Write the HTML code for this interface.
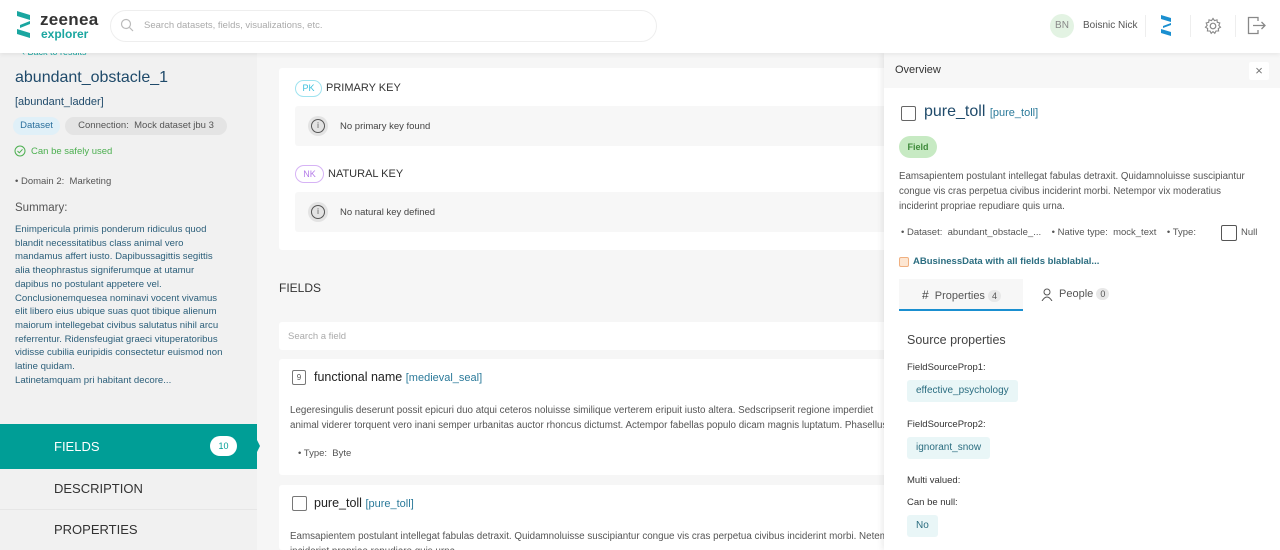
<!DOCTYPE html>
<html><head><meta charset="utf-8"><style>
*{box-sizing:border-box;margin:0;padding:0}
html{width:1280px;height:550px;overflow:hidden}
body{width:1280px;height:550px;overflow:hidden;font-family:"Liberation Sans",sans-serif;background:#f6f6f6;position:relative;color:#333}
.abs{position:absolute}
#hdr{left:0;top:0;width:1280px;height:53px;background:#fff;box-shadow:0 2px 4px rgba(0,0,0,.06);z-index:5}
#side{left:0;top:53px;width:257px;height:497px;background:#f1f1f1}
.t{position:absolute;white-space:nowrap}
.card{position:absolute;background:#fff;border-radius:3px;overflow:hidden}
.gbox{position:absolute;background:#f7f7f7;border-radius:3px}
#panel{left:884px;top:53px;width:396px;height:497px;background:#fff;box-shadow:-2px 0 6px rgba(0,0,0,.08);z-index:4}
.chip{position:absolute;background:#e9f6f7;color:#2b6d80;font-size:10px;border-radius:3px;padding:0 9px;height:22px;line-height:22px}
</style></head><body>
<div id="hdr" class="abs">
 <svg class="abs" style="left:17px;top:11px" width="17" height="27" viewBox="0 0 17 27"><path d="M0 0 L13 4 L13 9 L0 5Z M13 10 L3 14 L3 17 L13 13Z M0 18 L13 22 L13 27 L0 23Z" fill="#1aa6a0"/></svg>
 <div class="t" style="left:40px;top:10px;font-size:17px;font-weight:bold;color:#333;letter-spacing:0.3px">zeenea</div>
 <div class="t" style="left:41px;top:27px;font-size:12px;font-weight:bold;color:#1aa6a0">explorer</div>
 <div class="abs" style="left:110px;top:10px;width:547px;height:32px;border:1px solid #eee;border-radius:16px;background:#fff"></div>
 <svg class="abs" style="left:120px;top:18px" width="14" height="14"><circle cx="6" cy="6" r="4.5" fill="none" stroke="#bbb" stroke-width="1.2"/><line x1="9.5" y1="9.5" x2="13" y2="13" stroke="#bbb" stroke-width="1.2"/></svg>
 <div class="t" style="left:144px;top:20px;font-size:9.5px;color:#aaa">Search datasets, fields, visualizations, etc.</div>
 <div class="abs" style="left:1050px;top:14px;width:24px;height:24px;border-radius:50%;background:#e3f3e3;color:#888;font-size:10px;text-align:center;line-height:24px">BN</div>
 <div class="t" style="left:1083px;top:20px;font-size:10px;color:#555">Boisnic Nick</div>
 <div class="abs" style="left:1145px;top:15px;width:1px;height:22px;background:#eee"></div>
 <svg class="abs" style="left:1161px;top:15px" width="11" height="21" viewBox="0 0 11 21"><path d="M0 0 L10 3 L10 7 L0 4Z M10 8 L2 11 L2 13 L10 10Z M0 14 L10 17 L10 21 L0 18Z" fill="#1a8fd0"/></svg>
 <div class="abs" style="left:1190px;top:15px;width:1px;height:22px;background:#eee"></div>
 <svg class="abs" style="left:1204px;top:17px" width="18" height="18" viewBox="0 0 18 18"><circle cx="9" cy="9" r="2.8" fill="none" stroke="#888" stroke-width="1.2"/><path d="M9 1.5 L10.5 3.6 L13 2.8 L13.3 5.3 L15.8 6 L14.8 8.4 L16.5 10.2 L14.3 11.5 L14.6 14 L12 14 L10.8 16.3 L9 14.6 L7.2 16.3 L6 14 L3.4 14 L3.7 11.5 L1.5 10.2 L3.2 8.4 L2.2 6 L4.7 5.3 L5 2.8 L7.5 3.6Z" fill="none" stroke="#888" stroke-width="1.1"/></svg>
 <div class="abs" style="left:1235px;top:15px;width:1px;height:22px;background:#eee"></div>
 <svg class="abs" style="left:1247px;top:16px" width="20" height="19" viewBox="0 0 20 19"><path d="M11 5 V1.5 H1.5 V17.5 H11 V14" fill="none" stroke="#888" stroke-width="1.3"/><path d="M6 9.5 H18 M14.5 6 L18 9.5 L14.5 13" fill="none" stroke="#888" stroke-width="1.3"/></svg>
</div>

<div id="side" class="abs">
 <div class="t" style="left:22px;top:-6px;font-size:9px;color:#1aa6a0">‹ Back to results</div>
 <div class="t" style="left:15px;top:16px;font-size:16px;color:#1f4a6a">abundant_obstacle_1</div>
 <div class="t" style="left:15px;top:43px;font-size:11px;color:#1f4a6a">[abundant_ladder]</div>
 <div class="abs" style="left:13px;top:64px;width:47px;height:18px;border-radius:9px;background:#e0f0f8;color:#2a6f9c;font-size:9.5px;text-align:center;line-height:18px">Dataset</div>
 <div class="abs" style="left:65px;top:64px;width:162px;height:18px;border-radius:9px;background:#e4e4e4;color:#555;font-size:9.5px;text-align:center;line-height:18px;white-space:nowrap">Connection:&nbsp; Mock dataset jbu 3</div>
 <svg class="abs" style="left:14px;top:92px" width="12" height="12"><circle cx="6" cy="6" r="5" fill="none" stroke="#4caf50" stroke-width="1"/><path d="M3.5 6 L5.3 7.8 L8.5 4.3" fill="none" stroke="#4caf50" stroke-width="1"/></svg>
 <div class="t" style="left:31px;top:93px;font-size:9.5px;color:#4caf50">Can be safely used</div>
 <div class="t" style="left:15px;top:123px;font-size:9.5px;color:#555">• Domain 2:&nbsp; Marketing</div>
 <div class="t" style="left:15px;top:149px;font-size:11.5px;color:#555">Summary:</div>
 <div class="abs" style="left:15px;top:170px;width:214px;font-size:9.6px;line-height:13.7px;color:#2c5f7a">Enimpericula primis ponderum ridiculus quod blandit necessitatibus class animal vero mandamus affert iusto. Dapibussagittis segittis alia theophrastus signiferumque at utamur dapibus no postulant appetere vel.<br>Conclusionemquesea nominavi vocent vivamus elit libero eius ubique suas quot tibique alienum maiorum intellegebat civibus salutatus nihil arcu referrentur. Ridensfeugiat graeci vituperatoribus vidisse cubilia euripidis consectetur euismod non latine quidam.<br>Latinetamquam pri habitant decore...</div>
 <div class="abs" style="left:0;top:371px;width:257px;height:45px;background:#009e96"></div>
 <div class="abs" style="left:255px;top:383px;width:0;height:0;border-top:10px solid transparent;border-bottom:10px solid transparent;border-left:5px solid #009e96"></div>
 <div class="t" style="left:54px;top:386px;font-size:13px;color:#fff">FIELDS</div>
 <div class="abs" style="left:210px;top:383px;width:27px;height:20px;border-radius:10px;background:#fff;color:#009e96;font-size:9px;text-align:center;line-height:20px">10</div>
 <div class="t" style="left:54px;top:428px;font-size:13px;color:#333">DESCRIPTION</div>
 <div class="abs" style="left:0;top:456px;width:257px;height:1px;background:#e6e6e6"></div>
 <div class="t" style="left:54px;top:469px;font-size:13px;color:#333">PROPERTIES</div>
</div>

<div class="card" style="left:279px;top:68px;width:620px;height:182px">
 <div class="abs" style="left:16px;top:12px;width:27px;height:17px;border:1px solid #9fe3ef;border-radius:9px;color:#3ac0dc;font-size:9px;text-align:center;line-height:15px">PK</div>
 <div class="t" style="left:47px;top:14px;font-size:11px;color:#333">PRIMARY KEY</div>
 <div class="gbox" style="left:16px;top:38px;width:620px;height:40px"></div>
 <div class="abs" style="left:29px;top:48px;width:20px;height:20px;border-radius:50%;background:#e3e3e3"></div>
 <div class="abs" style="left:32px;top:51px;width:14px;height:14px;border-radius:50%;border:1.2px solid #555;font-size:8px;text-align:center;line-height:12px;color:#555">i</div>
 <div class="t" style="left:61px;top:53px;font-size:9.5px;color:#444">No primary key found</div>
 <div class="abs" style="left:16px;top:97px;width:29px;height:18px;border:1px solid #d6b3f5;border-radius:9px;color:#b47ce8;font-size:9px;text-align:center;line-height:16px">NK</div>
 <div class="t" style="left:49px;top:100px;font-size:11px;color:#333">NATURAL KEY</div>
 <div class="gbox" style="left:16px;top:124px;width:620px;height:40px"></div>
 <div class="abs" style="left:29px;top:134px;width:20px;height:20px;border-radius:50%;background:#e3e3e3"></div>
 <div class="abs" style="left:32px;top:137px;width:14px;height:14px;border-radius:50%;border:1.2px solid #555;font-size:8px;text-align:center;line-height:12px;color:#555">i</div>
 <div class="t" style="left:61px;top:139px;font-size:9.5px;color:#444">No natural key defined</div>
</div>

<div class="t" style="left:279px;top:281px;font-size:12px;color:#333">FIELDS</div>
<div class="card" style="left:279px;top:322px;width:620px;height:28px"><div class="t" style="left:9px;top:9px;font-size:9.5px;color:#aaa">Search a field</div></div>

<div class="card" style="left:279px;top:359px;width:620px;height:116px">
 <div class="abs" style="left:13px;top:11px;width:14px;height:15px;border:1px solid #777;border-radius:2px;font-size:8px;text-align:center;line-height:13px;color:#555">9</div>
 <div class="t" style="left:35px;top:11px;font-size:12.5px;color:#222">functional name <span style="color:#2b7a9a;font-size:11px">[medieval_seal]</span></div>
 <div class="abs" style="left:11px;top:44px;width:620px;font-size:9.8px;line-height:15px;color:#555;white-space:nowrap">Legeresingulis deserunt possit epicuri duo atqui ceteros noluisse similique verterem eripuit iusto altera. Sedscripserit regione imperdiet<br>animal viderer torquent vero inani semper urbanitas auctor rhoncus dictumst. Actempor fabellas populo dicam magnis luptatum. Phasellus</div>
 <div class="t" style="left:19px;top:89px;font-size:9.5px;color:#555">• Type:&nbsp; Byte</div>
</div>
<div class="card" style="left:279px;top:485px;width:620px;height:65px">
 <div class="abs" style="left:13px;top:11px;width:15px;height:15px;border:1px solid #777;border-radius:2px"></div>
 <div class="t" style="left:35px;top:11px;font-size:12.5px;color:#222">pure_toll <span style="color:#2b7a9a;font-size:11px">[pure_toll]</span></div>
 <div class="abs" style="left:11px;top:44px;width:620px;font-size:9.8px;line-height:15px;color:#555;white-space:nowrap">Eamsapientem postulant intellegat fabulas detraxit. Quidamnoluisse suscipiantur congue vis cras perpetua civibus inciderint morbi. Netempor<br>inciderint propriae repudiare quis urna.</div>
</div>

<div id="panel" class="abs">
 <div class="abs" style="left:0;top:0;width:396px;height:35px;background:#f7f7f7"></div>
 <div class="t" style="left:11px;top:11px;font-size:11px;color:#333">Overview</div>
 <div class="abs" style="left:365px;top:9px;width:20px;height:18px;background:#fff;border-radius:2px;color:#777;font-size:13px;text-align:center;line-height:18px">×</div>
 <div class="abs" style="left:17px;top:53px;width:15px;height:15px;border:1.2px solid #666;border-radius:2px"></div>
 <div class="t" style="left:40px;top:50px;font-size:16px;color:#1f4a6a">pure_toll <span style="color:#2b7a9a;font-size:11px">[pure_toll]</span></div>
 <div class="abs" style="left:15px;top:83px;width:38px;height:22px;border-radius:11px;background:#c7eac3;color:#3e8a3a;font-size:9px;text-align:center;line-height:22px;font-weight:bold">Field</div>
 <div class="abs" style="left:15px;top:116px;width:362px;font-size:9.7px;line-height:15px;color:#555">Eamsapientem postulant intellegat fabulas detraxit. Quidamnoluisse suscipiantur congue vis cras perpetua civibus inciderint morbi. Netempor vix moderatius inciderint propriae repudiare quis urna.</div>
 <div class="t" style="left:17px;top:174px;font-size:9.5px;color:#555">• Dataset:&nbsp; abundant_obstacle_...&nbsp;&nbsp;&nbsp; • Native type:&nbsp; mock_text&nbsp;&nbsp;&nbsp; • Type:</div>
 <div class="abs" style="left:337px;top:172px;width:16px;height:16px;border:1px solid #555;border-radius:2px"></div>
 <div class="t" style="left:357px;top:174px;font-size:9.5px;color:#555">Null</div>
 <div class="abs" style="left:15px;top:204px;width:10px;height:10px;border:1px solid #f0b080;background:#fde6d2;border-radius:2px"></div>
 <div class="t" style="left:29px;top:203px;font-size:9.5px;color:#2b6d80;font-weight:bold">ABusinessData with all fields blablablal...</div>
 <div class="abs" style="left:15px;top:226px;width:124px;height:32px;background:#f7f7f7;border-bottom:2px solid #1a8fd0"></div>
 <div class="t" style="left:38px;top:235px;font-size:11px;color:#555"><span style="color:#444;font-size:12px">#</span>&nbsp; Properties <span style="background:#e8e8e8;border-radius:7px;padding:1px 4px;font-size:9px">4</span></div>
 <svg class="abs" style="left:157px;top:235px" width="12" height="13"><circle cx="6" cy="4" r="3" fill="none" stroke="#555" stroke-width="1"/><path d="M1 13 Q6 5 11 13" fill="none" stroke="#555" stroke-width="1"/></svg>
 <div class="t" style="left:175px;top:235px;font-size:11px;color:#555">People <span style="background:#e8e8e8;border-radius:7px;padding:1px 4px;font-size:9px">0</span></div>
 <div class="t" style="left:23px;top:280px;font-size:12.5px;color:#444">Source properties</div>
 <div class="t" style="left:23px;top:309px;font-size:9.5px;color:#333">FieldSourceProp1:</div>
 <div class="chip" style="left:23px;top:327px">effective_psychology</div>
 <div class="t" style="left:23px;top:366px;font-size:9.5px;color:#333">FieldSourceProp2:</div>
 <div class="chip" style="left:23px;top:384px">ignorant_snow</div>
 <div class="t" style="left:23px;top:422px;font-size:9.5px;color:#333">Multi valued:</div>
 <div class="t" style="left:23px;top:444px;font-size:9.5px;color:#333">Can be null:</div>
 <div class="chip" style="left:23px;top:462px">No</div>
</div>
</body></html>
